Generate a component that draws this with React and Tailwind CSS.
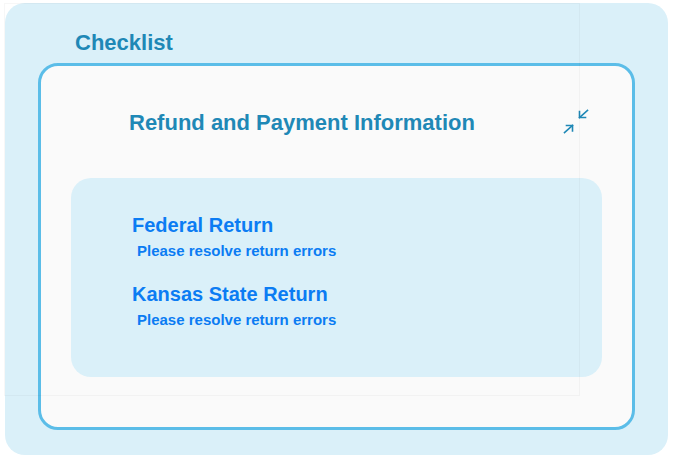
import React from "react";

function CollapseIcon() {
  return (
    <svg
      width="32"
      height="32"
      viewBox="0 0 32 32"
      fill="none"
      stroke="#1f88b6"
      strokeWidth="1.6"
      strokeLinecap="square"
    >
      <line x1="4.5" y1="26.5" x2="12.5" y2="19.5" />
      <polyline points="6.5,19.5 12.5,19.5 12.5,25" />
      <line x1="27.5" y1="4.5" x2="19.5" y2="11.5" />
      <polyline points="19.5,5.5 19.5,11.5 25.5,11.5" />
    </svg>
  );
}

function ReturnItem({ title, status }) {
  return (
    <div className="flex flex-col">
      <h3 className="text-[20px] leading-[23px] font-bold text-[#0b7cf3]">{title}</h3>
      <p className="ml-[5px] mt-[5px] text-[15px] leading-[17px] font-bold text-[#0b7cf3]">{status}</p>
    </div>
  );
}

export default function App() {
  return (
    <div
      className="relative min-h-[459px] bg-white pt-[3px] pl-[5px]"
      style={{ fontFamily: '"Liberation Sans", Arial, sans-serif' }}
    >
      <div className="w-[663px] h-[452px] rounded-[20px] bg-[#daf0f9] flex flex-col">
        <h1 className="ml-[70px] mt-[27px] text-[22px] leading-[25px] font-bold text-[#1f88b6]">
          Checklist
        </h1>

        <div className="ml-[33px] mt-[8px] w-[597px] h-[367px] rounded-[20px] border-[3px] border-[#5bbde8] bg-[#fafafa] flex flex-col">
          <div className="flex items-center justify-between pt-[40px] pl-[88px] pr-[40px]">
            <h2 className="text-[22px] leading-[25px] font-bold text-[#1f88b6]">
              Refund and Payment Information
            </h2>
            <CollapseIcon />
          </div>

          <div className="mx-[30px] mt-[40px] h-[199px] rounded-[20px] bg-[#daf0f9] pl-[61px] pt-[36px] flex flex-col gap-[24px]">
            <ReturnItem title="Federal Return" status="Please resolve return errors" />
            <ReturnItem title="Kansas State Return" status="Please resolve return errors" />
          </div>
        </div>
      </div>

      <div className="pointer-events-none absolute left-[4px] top-[3px] w-[576px] h-[393px] border border-black/[0.03]" />
    </div>
  );
}
